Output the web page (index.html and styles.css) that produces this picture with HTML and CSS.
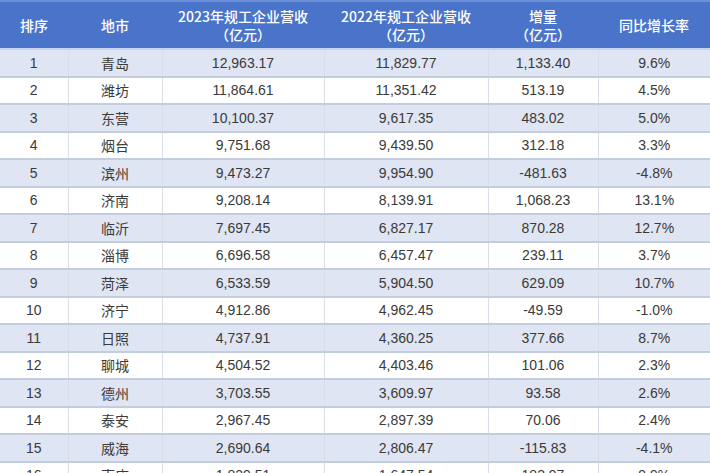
FILE: index.html
```html
<!DOCTYPE html>
<html lang="zh">
<head>
<meta charset="utf-8">
<link rel="stylesheet" href="styles.css">
</head>
<body>
<table class="data">
  <colgroup>
    <col class="c1"><col class="c2"><col class="c3"><col class="c4"><col class="c5"><col class="c6">
  </colgroup>
  <thead>
    <tr>
      <th>排序</th>
      <th>地市</th>
      <th>2023年规工企业营收<br>（亿元）</th>
      <th>2022年规工企业营收<br>（亿元）</th>
      <th>增量<br>（亿元）</th>
      <th>同比增长率</th>
    </tr>
  </thead>
  <tbody>
    <tr><td>1</td><td>青岛</td><td>12,963.17</td><td>11,829.77</td><td>1,133.40</td><td>9.6%</td></tr>
    <tr><td>2</td><td>潍坊</td><td>11,864.61</td><td>11,351.42</td><td>513.19</td><td>4.5%</td></tr>
    <tr><td>3</td><td>东营</td><td>10,100.37</td><td>9,617.35</td><td>483.02</td><td>5.0%</td></tr>
    <tr><td>4</td><td>烟台</td><td>9,751.68</td><td>9,439.50</td><td>312.18</td><td>3.3%</td></tr>
    <tr><td>5</td><td>滨州</td><td>9,473.27</td><td>9,954.90</td><td>-481.63</td><td>-4.8%</td></tr>
    <tr><td>6</td><td>济南</td><td>9,208.14</td><td>8,139.91</td><td>1,068.23</td><td>13.1%</td></tr>
    <tr><td>7</td><td>临沂</td><td>7,697.45</td><td>6,827.17</td><td>870.28</td><td>12.7%</td></tr>
    <tr><td>8</td><td>淄博</td><td>6,696.58</td><td>6,457.47</td><td>239.11</td><td>3.7%</td></tr>
    <tr><td>9</td><td>菏泽</td><td>6,533.59</td><td>5,904.50</td><td>629.09</td><td>10.7%</td></tr>
    <tr><td>10</td><td>济宁</td><td>4,912.86</td><td>4,962.45</td><td>-49.59</td><td>-1.0%</td></tr>
    <tr><td>11</td><td>日照</td><td>4,737.91</td><td>4,360.25</td><td>377.66</td><td>8.7%</td></tr>
    <tr><td>12</td><td>聊城</td><td>4,504.52</td><td>4,403.46</td><td>101.06</td><td>2.3%</td></tr>
    <tr><td>13</td><td>德州</td><td>3,703.55</td><td>3,609.97</td><td>93.58</td><td>2.6%</td></tr>
    <tr><td>14</td><td>泰安</td><td>2,967.45</td><td>2,897.39</td><td>70.06</td><td>2.4%</td></tr>
    <tr><td>15</td><td>威海</td><td>2,690.64</td><td>2,806.47</td><td>-115.83</td><td>-4.1%</td></tr>
    <tr><td>16</td><td>枣庄</td><td>1,829.51</td><td>1,647.54</td><td>182.97</td><td>9.9%</td></tr>
  </tbody>
</table>
</body>
</html>
```
FILE: styles.css
```css
html, body {
  margin: 0;
  padding: 0;
  background: #ffffff;
  overflow: hidden;
}
.data {
  width: 710px;
  border-collapse: collapse;
  table-layout: fixed;
  font-family: "Liberation Sans", "Noto Sans CJK SC", sans-serif;
  font-size: 14px;
  color: #3a3a3a;
}
.c1 { width: 68px; }
.c2 { width: 94px; }
.c3 { width: 162px; }
.c4 { width: 164px; }
.c5 { width: 110px; }
.c6 { width: 112px; }
.data th {
  height: 46px;
  padding: 0;
  background: #4a74c9;
  border-top: 2px solid #6a8fd6;
  border-bottom: 2px solid #c6d3ec;
  color: #ffffff;
  font-family: "Noto Sans CJK SC", "Liberation Sans", sans-serif;
  font-weight: 500;
  font-size: 14px;
  line-height: 18px;
  text-align: center;
  vertical-align: middle;
}
.data td {
  height: 25.5px;
  padding: 0;
  text-align: center;
  vertical-align: middle;
  border-bottom: 2px solid #c3cde0;
  border-left: 1px solid #d8dde6;
  line-height: 18px;
}
.data td:first-child { border-left: none; }
.data td:nth-child(2) { font-family: "Noto Sans CJK SC", sans-serif; }
.data tbody tr:nth-child(odd) td { background: #dfe5f2; }
.data tbody tr:nth-child(even) td { background: #ffffff; }
```
